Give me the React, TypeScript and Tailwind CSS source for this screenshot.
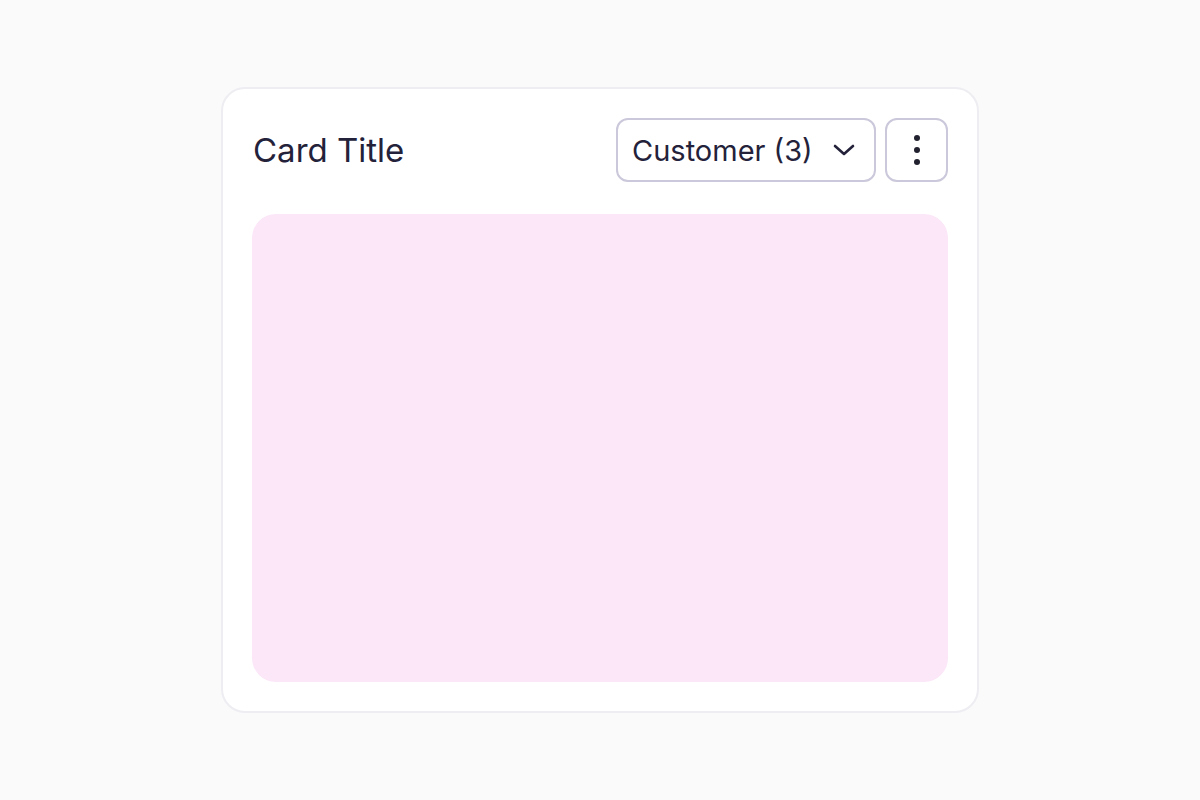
function MoreButton() {
  return (
    <button className="flex h-16 w-[63px] flex-col items-center justify-center gap-[6px] rounded-[12px] border-2 border-[#cac8da] bg-white">
      <span className="h-[6px] w-[6px] rounded-full bg-[#22212f]" />
      <span className="h-[6px] w-[6px] rounded-full bg-[#22212f]" />
      <span className="h-[6px] w-[6px] rounded-full bg-[#22212f]" />
    </button>
  );
}

function Chevron() {
  return (
    <svg width="22" height="12" viewBox="0 0 22 12" fill="none" className="text-[#23223a]">
      <path d="M2 2l9 8 9-8" stroke="currentColor" strokeWidth="2.6" strokeLinecap="round" strokeLinejoin="round" />
    </svg>
  );
}

export default function App() {
  return (
    <div className="flex min-h-screen items-center justify-center bg-[#fafafa] font-['Inter',sans-serif]">
      <div className="flex w-[758px] flex-col gap-8 rounded-[24px] border-2 border-[#ededf2] bg-white p-[29px]">
        {/* Header */}
        <div className="flex h-16 items-center justify-between">
          <h2 className="pl-px pt-[2px] text-[33px] font-normal text-[#23223a]">Card Title</h2>
          <div className="flex gap-[9px]">
            <button className="flex h-16 w-[260px] items-center justify-between rounded-[12px] border-2 border-[#cac8da] bg-white pl-[14px] pr-[19px] text-[29px] text-[#23223a]">
              <span className="pt-px">Customer (3)</span>
              <Chevron />
            </button>
            <MoreButton />
          </div>
        </div>

        {/* Content placeholder */}
        <div className="h-[468px] rounded-[24px] bg-[#fbe7f7]" />
      </div>
    </div>
  );
}
